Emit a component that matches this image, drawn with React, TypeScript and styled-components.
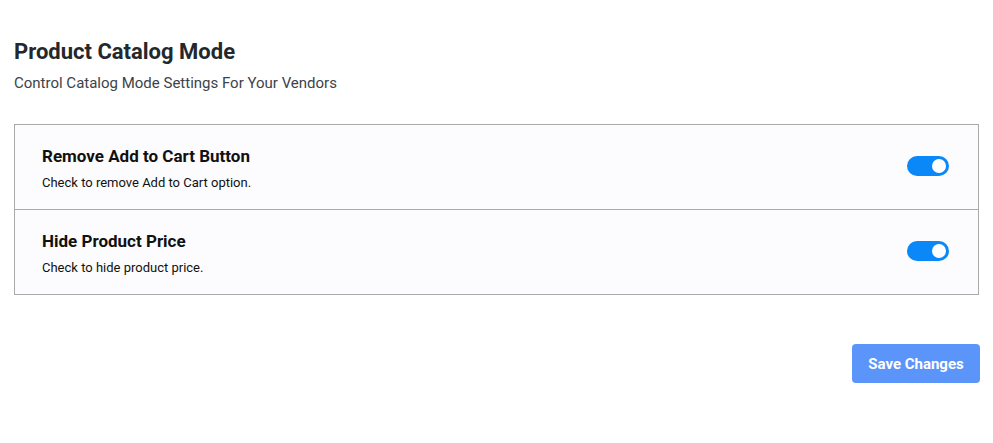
import React, { useState } from "react";
import styled, { createGlobalStyle } from "styled-components";

const Global = createGlobalStyle`
  html, body { margin: 0; padding: 0; background: #ffffff; }
  body { font-family: Roboto, "Noto Sans", sans-serif; }
`;

const Page = styled.div`
  padding: 39px 14px 0 14px;
`;

const Title = styled.h1`
  margin: 0;
  font-size: 22px;
  line-height: 26px;
  font-weight: 700;
  color: #23282d;
`;

const Subtitle = styled.p`
  margin: 8px 0 0 0;
  font-size: 15px;
  line-height: 20px;
  color: #3c434a;
`;

const Card = styled.div`
  margin-top: 31px;
  border: 1px solid #aaaaaa;
  background: #fcfcfe;
`;

const Row = styled.div`
  display: flex;
  align-items: center;
  justify-content: space-between;
  height: 84px;
  padding: 0 29px 0 27px;
  & + & {
    border-top: 1px solid #aaaaaa;
  }
`;

const Texts = styled.div`
  display: flex;
  flex-direction: column;
  gap: 9px;
  margin-top: 2px;
`;

const RowTitle = styled.div`
  font-size: 17px;
  line-height: 20px;
  font-weight: 700;
  color: #111111;
`;

const RowDesc = styled.div`
  font-size: 13px;
  line-height: 16px;
  color: #111111;
`;

const Toggle = styled.button<{ $on: boolean }>`
  position: relative;
  width: 42px;
  height: 20px;
  border: none;
  padding: 0;
  border-radius: 10px;
  background: ${(p) => (p.$on ? "#0a88f8" : "#c3c4c7")};
  cursor: pointer;
  margin-top: -2px;
  &::after {
    content: "";
    position: absolute;
    top: 3px;
    left: ${(p) => (p.$on ? "25px" : "3px")};
    width: 14px;
    height: 14px;
    border-radius: 50%;
    background: #ffffff;
  }
`;

const Footer = styled.div`
  display: flex;
  justify-content: flex-end;
  margin-top: 49px;
  margin-right: -1px;
`;

const SaveButton = styled.button`
  width: 128px;
  height: 39px;
  border: none;
  border-radius: 4px;
  background: #5b95f9;
  color: #ffffff;
  font-family: Roboto, "Noto Sans", sans-serif;
  font-size: 15px;
  font-weight: 700;
  cursor: pointer;
`;

const items = [
  { title: "Remove Add to Cart Button", desc: "Check to remove Add to Cart option." },
  { title: "Hide Product Price", desc: "Check to hide product price." },
];

export default function App() {
  const [state, setState] = useState([true, true]);
  return (
    <>
      <Global />
      <Page>
        <Title>Product Catalog Mode</Title>
        <Subtitle>Control Catalog Mode Settings For Your Vendors</Subtitle>
        <Card>
          {items.map((it, i) => (
            <Row key={it.title}>
              <Texts>
                <RowTitle>{it.title}</RowTitle>
                <RowDesc>{it.desc}</RowDesc>
              </Texts>
              <Toggle
                $on={state[i]}
                aria-label={it.title}
                onClick={() => setState((s) => s.map((v, j) => (j === i ? !v : v)))}
              />
            </Row>
          ))}
        </Card>
        <Footer>
          <SaveButton>Save Changes</SaveButton>
        </Footer>
      </Page>
    </>
  );
}
